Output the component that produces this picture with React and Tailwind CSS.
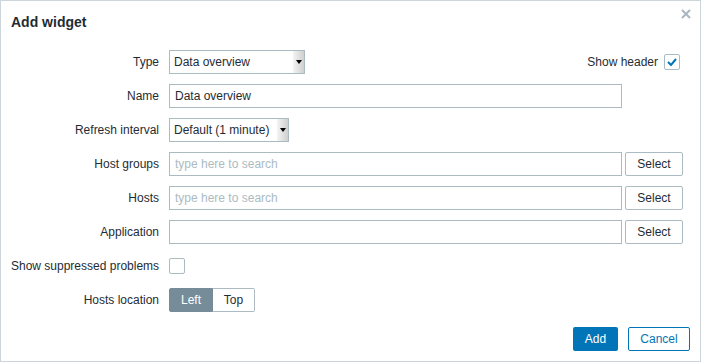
import React from "react";

const labelCls = "w-[148px] shrink-0 whitespace-nowrap text-right";

function Row({ label, children }) {
  return (
    <div className="flex h-[24px] items-center">
      <div className={labelCls}>{label}</div>
      <div className="ml-[10px] flex flex-1 items-center">{children}</div>
    </div>
  );
}

function FakeSelect({ value, width }) {
  return (
    <div
      className="relative flex h-[24px] items-center border border-[#acbbc2] bg-white pl-[4px]"
      style={{ width }}
    >
      <span>{value}</span>
      <div className="absolute right-0 top-0 flex h-[22px] w-[11px] items-center justify-center bg-gradient-to-r from-[#f4f4f4] to-[#cfcfcf]">
        <svg width="6" height="4" viewBox="0 0 6 4">
          <path d="M0 0h6L3 4z" fill="#000" />
        </svg>
      </div>
    </div>
  );
}

function TextInput({ value, placeholder }) {
  return (
    <div className="flex h-[24px] w-[453px] items-center border border-[#acbbc2] bg-white px-[5px]">
      {value ? <span>{value}</span> : <span className="text-[#acbbc2]">{placeholder}</span>}
    </div>
  );
}

function SelectBtn() {
  return (
    <div className="ml-[3px] flex h-[24px] w-[58px] items-center justify-center rounded-[2px] border border-[#acbbc2] bg-white">
      Select
    </div>
  );
}

export default function App() {
  return (
    <div
      className="relative flex h-[362px] w-[701px] flex-col border border-[#ccd5d9] bg-white text-[12px] text-[#1f2c33]"
      style={{ fontFamily: '"Liberation Sans", Arial, sans-serif' }}
    >
      <div className="px-[10px] pt-[11px] text-[14px] font-bold leading-[20px]">Add widget</div>
      <svg className="absolute right-[9px] top-[8px]" width="10" height="10" viewBox="0 0 10 10">
        <path d="M1 1L9 9M9 1L1 9" stroke="#aab6bd" strokeWidth="2" />
      </svg>

      <div className="mt-[18px] flex flex-col gap-[10px] pl-[10px]">
        <Row label="Type">
          <FakeSelect value="Data overview" width={136} />
          <div className="ml-auto mr-[20px] flex items-center">
            <span>Show header</span>
            <div className="ml-[6px] flex h-[16px] w-[16px] items-center justify-center rounded-[2px] border border-[#acbbc2] bg-white">
              <svg width="10" height="8" viewBox="0 0 10 8">
                <path d="M1 4l3 3 5-6" stroke="#0275b8" strokeWidth="2" fill="none" />
              </svg>
            </div>
          </div>
        </Row>
        <Row label="Name">
          <TextInput value="Data overview" />
        </Row>
        <Row label="Refresh interval">
          <FakeSelect value="Default (1 minute)" width={120} />
        </Row>
        <Row label="Host groups">
          <TextInput placeholder="type here to search" />
          <SelectBtn />
        </Row>
        <Row label="Hosts">
          <TextInput placeholder="type here to search" />
          <SelectBtn />
        </Row>
        <Row label="Application">
          <TextInput />
          <SelectBtn />
        </Row>
        <Row label="Show suppressed problems">
          <div className="h-[16px] w-[16px] rounded-[2px] border border-[#acbbc2] bg-white" />
        </Row>
        <Row label="Hosts location">
          <div className="flex h-[24px]">
            <div className="flex w-[44px] items-center justify-center rounded-l-[2px] border border-[#768d99] bg-[#768d99] text-white">
              Left
            </div>
            <div className="flex w-[42px] items-center justify-center rounded-r-[2px] border border-l-0 border-[#acbbc2] bg-white">
              Top
            </div>
          </div>
        </Row>
      </div>

      <div className="mt-[15px] flex justify-end gap-[10px] pr-[10px]">
        <div className="flex h-[24px] w-[45px] items-center justify-center rounded-[2px] bg-[#0275b8] text-white">
          Add
        </div>
        <div className="flex h-[24px] w-[62px] items-center justify-center rounded-[2px] border border-[#0275b8] bg-white text-[#0275b8]">
          Cancel
        </div>
      </div>
    </div>
  );
}
